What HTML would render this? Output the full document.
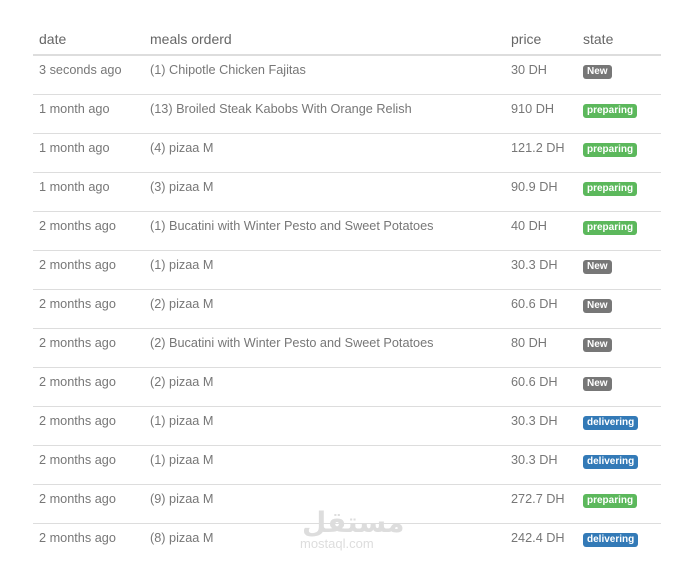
<!DOCTYPE html>
<html><head><style>
body{margin:0;background:#fff;font-family:"Liberation Sans",sans-serif;color:#777;font-size:12.7px;}
.t{position:absolute;left:33px;top:0;width:628px;}
.r{position:relative;height:38px;border-top:1px solid #ddd;}
.h{height:54px;border:none;border-bottom:2px solid #ddd;color:#666;font-size:14px;}
.c{position:absolute;line-height:16px;top:6px;white-space:nowrap;}
.h .c{top:31px;}
.a{left:6px}.b{left:117px}.p{left:478px}.s{left:550px}
.g{display:inline-block;color:#fff;font-weight:bold;font-size:10px;line-height:14px;padding:0 4px;border-radius:3px;margin-top:3px}
.n{background:#777}.pr{background:#5cb85c}.d{background:#337ab7}
.wm{position:absolute;left:300px;top:510px;color:#ddd;font-size:13px;}
</style></head><body>
<div class="t">
<div class="r h"><span class="c a">date</span><span class="c b">meals orderd</span><span class="c p">price</span><span class="c s">state</span></div>
<div class="r" style="border-top:none;height:38px"><span class="c a">3 seconds ago</span><span class="c b">(1) Chipotle Chicken Fajitas</span><span class="c p">30 DH</span><span class="c s"><span class="g n">New</span></span></div>
<div class="r"><span class="c a">1 month ago</span><span class="c b">(13) Broiled Steak Kabobs With Orange Relish</span><span class="c p">910 DH</span><span class="c s"><span class="g pr">preparing</span></span></div>
<div class="r"><span class="c a">1 month ago</span><span class="c b">(4) pizaa M</span><span class="c p">121.2 DH</span><span class="c s"><span class="g pr">preparing</span></span></div>
<div class="r"><span class="c a">1 month ago</span><span class="c b">(3) pizaa M</span><span class="c p">90.9 DH</span><span class="c s"><span class="g pr">preparing</span></span></div>
<div class="r"><span class="c a">2 months ago</span><span class="c b">(1) Bucatini with Winter Pesto and Sweet Potatoes</span><span class="c p">40 DH</span><span class="c s"><span class="g pr">preparing</span></span></div>
<div class="r"><span class="c a">2 months ago</span><span class="c b">(1) pizaa M</span><span class="c p">30.3 DH</span><span class="c s"><span class="g n">New</span></span></div>
<div class="r"><span class="c a">2 months ago</span><span class="c b">(2) pizaa M</span><span class="c p">60.6 DH</span><span class="c s"><span class="g n">New</span></span></div>
<div class="r"><span class="c a">2 months ago</span><span class="c b">(2) Bucatini with Winter Pesto and Sweet Potatoes</span><span class="c p">80 DH</span><span class="c s"><span class="g n">New</span></span></div>
<div class="r"><span class="c a">2 months ago</span><span class="c b">(2) pizaa M</span><span class="c p">60.6 DH</span><span class="c s"><span class="g n">New</span></span></div>
<div class="r"><span class="c a">2 months ago</span><span class="c b">(1) pizaa M</span><span class="c p">30.3 DH</span><span class="c s"><span class="g d">delivering</span></span></div>
<div class="r"><span class="c a">2 months ago</span><span class="c b">(1) pizaa M</span><span class="c p">30.3 DH</span><span class="c s"><span class="g d">delivering</span></span></div>
<div class="r"><span class="c a">2 months ago</span><span class="c b">(9) pizaa M</span><span class="c p">272.7 DH</span><span class="c s"><span class="g pr">preparing</span></span></div>
<div class="r"><span class="c a">2 months ago</span><span class="c b">(8) pizaa M</span><span class="c p">242.4 DH</span><span class="c s"><span class="g d">delivering</span></span></div>
</div>
<div class="wm"><div style="font-size:28px;font-weight:bold;line-height:26px;margin-left:2px;font-family:'DejaVu Sans',sans-serif">مستقل</div><div>mostaql.com</div></div>
</body></html>
